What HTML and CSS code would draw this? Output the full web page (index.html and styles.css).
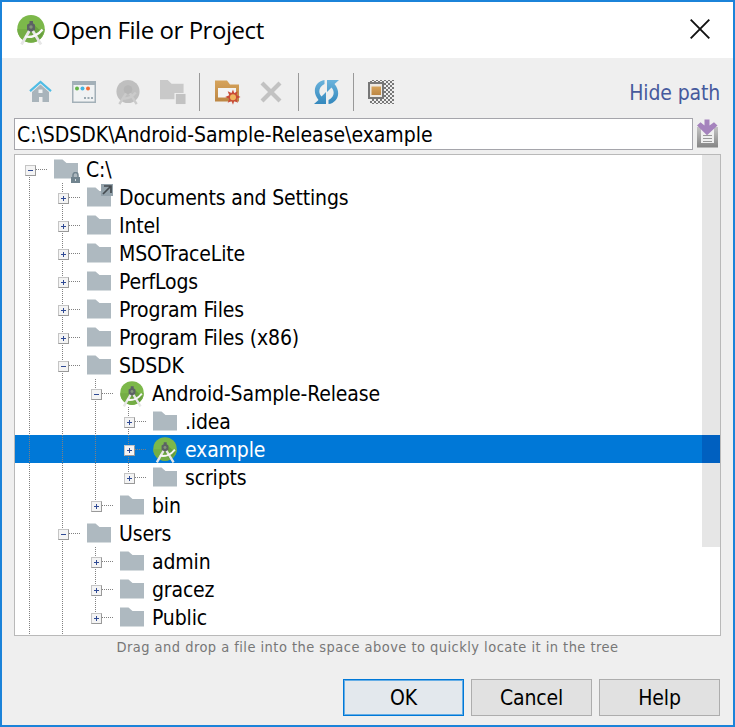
FILE: index.html
```html
<!DOCTYPE html>
<html lang="en">
<head>
<meta charset="utf-8">
<title>Open File or Project</title>
<link rel="stylesheet" href="styles.css">
</head>
<body>
<svg class="defs" aria-hidden="true">
  <defs>
    <linearGradient id="blue" x1="0" y1="0" x2="0" y2="1"><stop offset="0" stop-color="#6bb3dc"/><stop offset="1" stop-color="#3488bd"/></linearGradient>
    <linearGradient id="gold" x1="0" y1="0" x2="0" y2="1"><stop offset="0" stop-color="#d6a35b"/><stop offset="1" stop-color="#bd8744"/></linearGradient>
    <linearGradient id="grey" x1="0" y1="0" x2="0" y2="1"><stop offset="0" stop-color="#c4c4c4"/><stop offset="1" stop-color="#858585"/></linearGradient>
    <pattern id="check" width="4" height="4" patternUnits="userSpaceOnUse"><path d="M0 0h2v2H0zM2 2h2v2H2z" fill="#777"/></pattern>
  </defs>
  <symbol id="folder" viewBox="0 0 24 20"><path d="M0 0.500h8.500l4 3.500H24v15.500H0z" fill="#aeb9c0"/></symbol>
  <symbol id="studio" viewBox="0 0 28 30">
    <circle cx="14" cy="13.700" r="13.700" fill="#7cb84a"/>
    <path d="M.3 14a13.700 13.700 0 0 0 27.400 0z" fill="#74ad45"/>
    <path d="M16 9l10 9a13.700 13.700 0 0 1-6 8L10 16z" fill="#689f3e"/>
    <path d="M12.800 15L4.500 29.500M15.200 15L24 29.500" stroke="#e6e6e6" stroke-width="2.800" fill="none"/>
    <path d="M8 21.500c6 1.500 13-1 17.500-7" stroke="#f7f7f7" stroke-width="2.300" fill="none"/>
    <path d="M12.500 6h3.500v2.200l2 1.500v5L14 17l-4-2.300v-5l2.500-1.500z" fill="#5c6264"/>
    <circle cx="14" cy="12" r="1.700" fill="#83947a"/>
  </symbol>
</svg>
<div class="dialog">
  <header class="titlebar">
    <svg class="app-icon"><use href="#studio"/></svg>
    <h1 class="title">Open File or Project</h1>
    <svg class="close" viewBox="0 0 20 20"><path d="M.7.700l18.600 18.600M19.300.7L.7 19.300" stroke="#111" stroke-width="1.900"/></svg>
  </header>

  <div class="toolbar">
    <svg class="tool home" viewBox="0 0 24 24"><path d="M3 12l8.500-7.500L20 12v10h-6.500v-5h-3.500v5H3z" fill="#a9b4bb"/><path d="M9.500 9.500h4v3.500h-4z" fill="#eff2f3"/><path d="M1 11.200L11.500 2 22 11.200" fill="none" stroke="#4fbce5" stroke-width="2.200"/></svg>
    <svg class="tool" viewBox="0 0 26 24"><path d="M1 1h24v22H1z" fill="#a3b0b8"/><path d="M2.500 5h21v16.500h-21z" fill="#f0f2f3"/><circle cx="6" cy="8.500" r="2" fill="#65b548"/><circle cx="11.500" cy="8.500" r="2" fill="#42b4e0"/><circle cx="17" cy="8.500" r="2" fill="#f26a32"/><path d="M13 17h2v2h-2zM16.500 17h2v2h-2zM20 17h2v2h-2z" fill="#9caab2"/></svg>
    <svg class="tool" viewBox="0 0 26 27"><circle cx="13" cy="13" r="12" fill="#bfbfbf"/><circle cx="13" cy="11" r="4.500" fill="#b6b6b6"/><path d="M11 15L4 26M15 15l7 11M7 20c5 1 10-1 14-6" fill="none" stroke="#cbcbcb" stroke-width="2.500"/></svg>
    <svg class="tool copy-folder" viewBox="0 0 27 25"><path d="M0 0h8l4 4h12.500v9.500h-9.500V20H0z" fill="#c9c9c9"/><path d="M16.500 14.500h10V25h-10z" fill="#c2c2c2"/></svg>
    <i class="sep"></i>
    <svg class="tool new-folder" viewBox="0 0 26 25"><path d="M0 1h12l3 4h9v17H0z" fill="url(#gold)"/><path d="M3 8.500h18v9.500H3z" fill="#f4f4f4"/><path d="M18 10l1.200 3.600 3.600-1.800-1.200 3.700 3.900 2-3.900 1.700 1.400 4-3.800-1.800-1.200 3.900-1.500-3.900-3.800 1.800 1.500-3.900-4-1.800 4-1.700-1.500-4 3.800 1.800z" fill="#c94c37"/><circle cx="18" cy="17.700" r="3" fill="#f0b55f"/></svg>
    <svg class="tool delete" viewBox="0 0 22 22"><path d="M2 2l18 18M20 2L2 20" stroke="#c2c2c2" stroke-width="4.200"/></svg>
    <i class="sep sep-b"></i>
    <svg class="tool refresh" viewBox="0 0 26 26"><path d="M10.500 1v4C4.500 8 4 13.500 7.500 17.500l4.500-4.500v12H0l4.500-4C-3 12 2 2 10.500 1z" fill="url(#blue)"/><path d="M14.500 25v-4c6-3 6.500-8.500 3-12.500L13 13V1h12l-4.500 4C28 14 23 24 14.500 25z" fill="url(#blue)"/></svg>
    <i class="sep sep-c"></i>
    <svg class="tool hidden-files" viewBox="0 0 26 26"><path d="M2 1h24v24H2z" fill="url(#check)"/><path d="M1 4h14v15H1z" fill="#ece8e2" stroke="#777" stroke-width="2"/><path d="M3.500 7.500h9.500v8.500H3.500z" fill="url(#gold)"/></svg>
    <a class="hide-path">Hide path</a>
  </div>

  <div class="path-row">
    <div class="path-input">C:\SDSDK\Android-Sample-Release\example</div>
    <svg class="history" viewBox="0 0 21 29"><path d="M0 8h4v16h13V8h4v20.500H0z" fill="url(#grey)"/><path d="M4 10h13v14H4z" fill="#efefef"/><path d="M6 16.500h9M6 19.500h9M6 22.500h9" stroke="#999"/><path d="M7.500 0.500h5v6l4.500-3.300 3.500 3.300-10.500 9.700L0 6.500l3.500-3.300 4 3.300z" fill="#a583bd"/></svg>
  </div>

  <div class="tree">
    <div class="row"><i class="g x minus from"></i><span class="ico"><svg class="folder"><use href="#folder"/></svg><svg class="lock" viewBox="0 0 9 11"><path d="M2 5V3a2.500 2.500 0 0 1 5 0v2" fill="none" stroke="#71848f" stroke-width="1.500"/><path d="M0 5h9v6H0z" fill="#71848f"/><path d="M4 7h1v2H4z" fill="#d5dce0"/></svg></span><span class="label">C:\</span></div>
    <div class="row"><i class="g"></i><i class="g x plus"></i><span class="ico"><svg class="folder"><use href="#folder"/></svg><svg class="link" viewBox="0 0 12 12"><path d="M0 0h12v12H0z" fill="#94a3ac"/><path d="M3 2h7v7M9.500 2.500l-7.500 7.500" fill="none" stroke="#444b50" stroke-width="1.700"/></svg></span><span class="label">Documents and Settings</span></div>
    <div class="row"><i class="g"></i><i class="g x plus"></i><span class="ico"><svg class="folder"><use href="#folder"/></svg></span><span class="label">Intel</span></div>
    <div class="row"><i class="g"></i><i class="g x plus"></i><span class="ico"><svg class="folder"><use href="#folder"/></svg></span><span class="label">MSOTraceLite</span></div>
    <div class="row"><i class="g"></i><i class="g x plus"></i><span class="ico"><svg class="folder"><use href="#folder"/></svg></span><span class="label">PerfLogs</span></div>
    <div class="row"><i class="g"></i><i class="g x plus"></i><span class="ico"><svg class="folder"><use href="#folder"/></svg></span><span class="label">Program Files</span></div>
    <div class="row"><i class="g"></i><i class="g x plus"></i><span class="ico"><svg class="folder"><use href="#folder"/></svg></span><span class="label">Program Files (x86)</span></div>
    <div class="row"><i class="g"></i><i class="g x minus"></i><span class="ico"><svg class="folder"><use href="#folder"/></svg></span><span class="label">SDSDK</span></div>
    <div class="row"><i class="g"></i><i class="g"></i><i class="g x minus"></i><span class="ico"><svg class="studio"><use href="#studio"/></svg></span><span class="label">Android-Sample-Release</span></div>
    <div class="row"><i class="g"></i><i class="g"></i><i class="g"></i><i class="g x plus"></i><span class="ico"><svg class="folder"><use href="#folder"/></svg></span><span class="label">.idea</span></div>
    <div class="row selected"><i class="g"></i><i class="g"></i><i class="g"></i><i class="g x plus"></i><span class="ico"><svg class="studio"><use href="#studio"/></svg></span><span class="label">example</span></div>
    <div class="row"><i class="g"></i><i class="g"></i><i class="g"></i><i class="g x plus last"></i><span class="ico"><svg class="folder"><use href="#folder"/></svg></span><span class="label">scripts</span></div>
    <div class="row"><i class="g"></i><i class="g"></i><i class="g x plus last"></i><span class="ico"><svg class="folder"><use href="#folder"/></svg></span><span class="label">bin</span></div>
    <div class="row"><i class="g"></i><i class="g x minus"></i><span class="ico"><svg class="folder"><use href="#folder"/></svg></span><span class="label">Users</span></div>
    <div class="row"><i class="g"></i><i class="g"></i><i class="g x plus"></i><span class="ico"><svg class="folder"><use href="#folder"/></svg></span><span class="label">admin</span></div>
    <div class="row"><i class="g"></i><i class="g"></i><i class="g x plus"></i><span class="ico"><svg class="folder"><use href="#folder"/></svg></span><span class="label">gracez</span></div>
    <div class="row"><i class="g"></i><i class="g"></i><i class="g x plus last"></i><span class="ico"><svg class="folder"><use href="#folder"/></svg></span><span class="label">Public</span></div>
    <div class="row"><i class="g"></i><i class="g"></i></div>
    <div class="scrollbar"></div>
  </div>
  <p class="hint">Drag and drop a file into the space above to quickly locate it in the tree</p>
  <footer class="buttons">
    <button class="btn primary">OK</button>
    <button class="btn">Cancel</button>
    <button class="btn">Help</button>
  </footer>
</div>
</body>
</html>
```
FILE: styles.css
```css
* { box-sizing: border-box; }
body { margin: 0; }
svg { display: block; flex: none; }
.defs { position: absolute; width: 0; height: 0; }

.dialog {
  width: 735px;
  height: 727px;
  border: 2px solid #1b83d9;
  background: #efefef;
  color: #000;
  font: 21px/28px "DejaVu Sans Condensed", "Noto Sans", sans-serif;
  font-stretch: condensed;
  letter-spacing: -0.15px;
  display: flex;
  flex-direction: column;
  overflow: hidden;
}

.titlebar {
  height: 56px;
  flex: none;
  background: #fff;
  display: flex;
  align-items: center;
  padding: 0 23px 0 15px;
}
.app-icon { width: 28px; height: 30px; }
.title {
  margin: 0 auto 0 7px;
  font: 400 24px/32px "Open Sans", "Noto Sans", sans-serif;
  letter-spacing: -0.45px;
  white-space: nowrap;
}
.close { width: 20px; height: 20px; margin-top: -2px; }

.toolbar {
  height: 60px;
  flex: none;
  display: flex;
  align-items: center;
  padding: 8px 13px 0 27px;
}
.tool { width: 26px; height: 26px; margin-right: 18px; }
.home { width: 24px; height: 24px; }
.copy-folder { margin-left: 1px; margin-right: 17px; }
.sep { width: 1px; height: 38px; background: #999; margin: 0 15px 0 -4px; }
.new-folder { margin-right: 19px; }
.delete { width: 22px; height: 22px; margin-right: 22px; }
.sep-b { margin-left: -6px; }
.sep-c { margin-left: -5px; margin-right: 14px; }
.hide-path { margin-left: auto; padding-top: 2px; color: #465a9d; }

.path-row { display: flex; flex: none; height: 32px; padding-left: 12px; }
.path-input {
  width: 679px;
  height: 32px;
  border: 1px solid #a5a5ab;
  background: #fff;
  padding-left: 2px;
  line-height: 33px;
  letter-spacing: -0.03px;
  white-space: nowrap;
}
.history { width: 21px; height: 29px; margin: 1px 0 0 4px; }

.tree {
  position: relative;
  width: 707px;
  height: 482px;
  flex: none;
  margin: 4px 0 0 12px;
  border: 1px solid #b9b9b9;
  background: #fff;
  overflow: hidden;
}
.row { height: 28px; display: flex; align-items: center; }
.row.selected { background: #0078d7; color: #fff; }
.g {
  position: relative;
  flex: none;
  width: 33px;
  height: 28px;
  background: repeating-linear-gradient(#808080 0 1px, transparent 1px 2px) 14px 0 / 1px 28px no-repeat;
}
.g.from { background-position: 14px 14px; }
.g.last { background-size: 1px 14px; }
.x::before {
  content: "";
  position: absolute;
  left: 19px;
  top: 14px;
  width: 14px;
  height: 1px;
  background: repeating-linear-gradient(90deg, #808080 0 1px, transparent 1px 2px);
}
.x::after {
  content: "";
  position: absolute;
  left: 10px;
  top: 10px;
  width: 9px;
  height: 9px;
  border: 1px solid #999;
  border-left-color: #c5c5c5;
  border-top-color: #c5c5c5;
  background: linear-gradient(#2f4a94, #2f4a94) center / 5px 1px no-repeat, #f4f4f4;
}
.plus::after {
  background: linear-gradient(#2f4a94, #2f4a94) center / 5px 1px no-repeat,
    linear-gradient(#2f4a94, #2f4a94) center / 1px 5px no-repeat, #f4f4f4;
}
.ico { position: relative; width: 24px; height: 28px; margin: 0 8px 0 6px; flex: none; }
.folder { width: 24px; height: 20px; margin-top: 4px; }
.studio { width: 24px; height: 26px; margin-top: 2px; }
.lock { position: absolute; left: 17px; top: 17px; width: 9px; height: 11px; }
.link { position: absolute; left: 14px; top: 1px; width: 12px; height: 12px; }
.label { padding-top: 2px; white-space: nowrap; }
.scrollbar {
  position: absolute;
  right: 0;
  top: 0;
  width: 18px;
  height: 392px;
  background: #e6e6e6;
}
.row.selected::after {
  content: "";
  position: relative;
  z-index: 1;
  width: 18px;
  height: 28px;
  margin-left: auto;
  background: #0060c0;
}

.hint {
  margin: 0;
  height: 24px;
  flex: none;
  text-align: center;
  color: #777;
  font-size: 14.5px;
  letter-spacing: 0.46px;
  line-height: 23px;
}
.buttons { display: flex; justify-content: flex-end; gap: 7px; padding: 19px 13px 0 0; }
.btn {
  width: 121px;
  height: 37px;
  padding: 1px 0 0;
  border: 1px solid #adadad;
  background: #e1e1e1;
  color: #000;
  font: inherit;
  letter-spacing: inherit;
}
.btn.primary { border-color: #0078d7; box-shadow: inset 0 0 0 1px #66aee6; background: #e3e8ed; }
```
